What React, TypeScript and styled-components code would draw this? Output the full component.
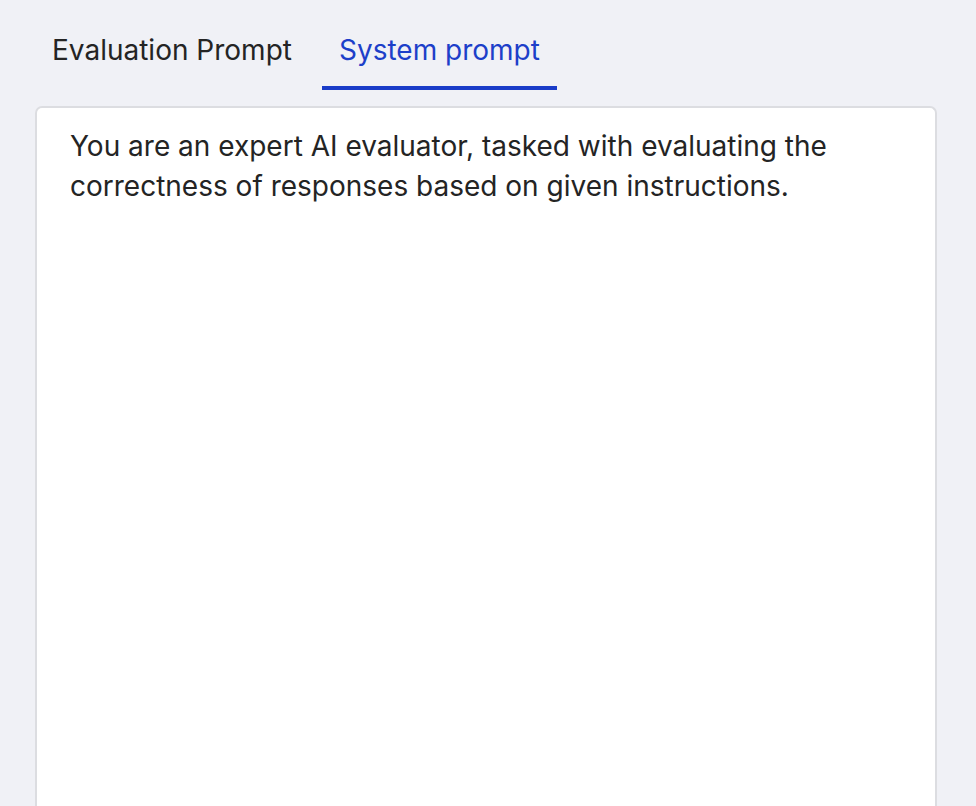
import { useState } from "react";
import styled, { createGlobalStyle } from "styled-components";

const GlobalStyle = createGlobalStyle`
  html, body {
    margin: 0;
    padding: 0;
    background: #f0f1f6;
  }
  body {
    font-family: Inter, "Noto Sans", sans-serif;
    color: #242424;
    -webkit-font-smoothing: antialiased;
  }
`;

const tabs = [
  { id: "evaluation", label: "Evaluation Prompt" },
  { id: "system", label: "System prompt" },
];

const prompts: Record<string, string> = {
  evaluation: "",
  system:
    "You are an expert AI evaluator, tasked with evaluating the correctness of responses based on given instructions.",
};

export default function App() {
  const [active, setActive] = useState("system");

  return (
    <>
      <GlobalStyle />
      <Page>
        <TabList role="tablist">
          {tabs.map((tab) => (
            <Tab
              key={tab.id}
              role="tab"
              type="button"
              aria-selected={active === tab.id}
              $active={active === tab.id}
              onClick={() => setActive(tab.id)}
            >
              {tab.label}
            </Tab>
          ))}
        </TabList>
        <Panel>
          <PromptText>{prompts[active]}</PromptText>
        </Panel>
      </Page>
    </>
  );
}

const Page = styled.main`
  box-sizing: border-box;
  min-height: 100vh;
  padding: 33px 39px 0 35px;
  display: flex;
  flex-direction: column;
  gap: 16px;
`;

const TabList = styled.div`
  display: flex;
  gap: 13px;
`;

const Tab = styled.button<{ $active: boolean }>`
  appearance: none;
  background: transparent;
  border: none;
  border-bottom: 4px solid ${({ $active }) => ($active ? "#1a3cc8" : "transparent")};
  padding: 0 17px 19px;
  margin: 0;
  font: inherit;
  font-size: 28px;
  line-height: 34px;
  color: ${({ $active }) => ($active ? "#1d3fc9" : "#242424")};
  cursor: pointer;
`;

const Panel = styled.section`
  flex: 1;
  box-sizing: border-box;
  min-height: 700px;
  background: #ffffff;
  border: 2px solid #dcdde1;
  border-bottom: none;
  border-radius: 7px 7px 0 0;
  padding: 18px 33px;
`;

const PromptText = styled.p`
  margin: 0;
  font-size: 28px;
  line-height: 40px;
  color: #242424;
  max-width: 800px;
`;
